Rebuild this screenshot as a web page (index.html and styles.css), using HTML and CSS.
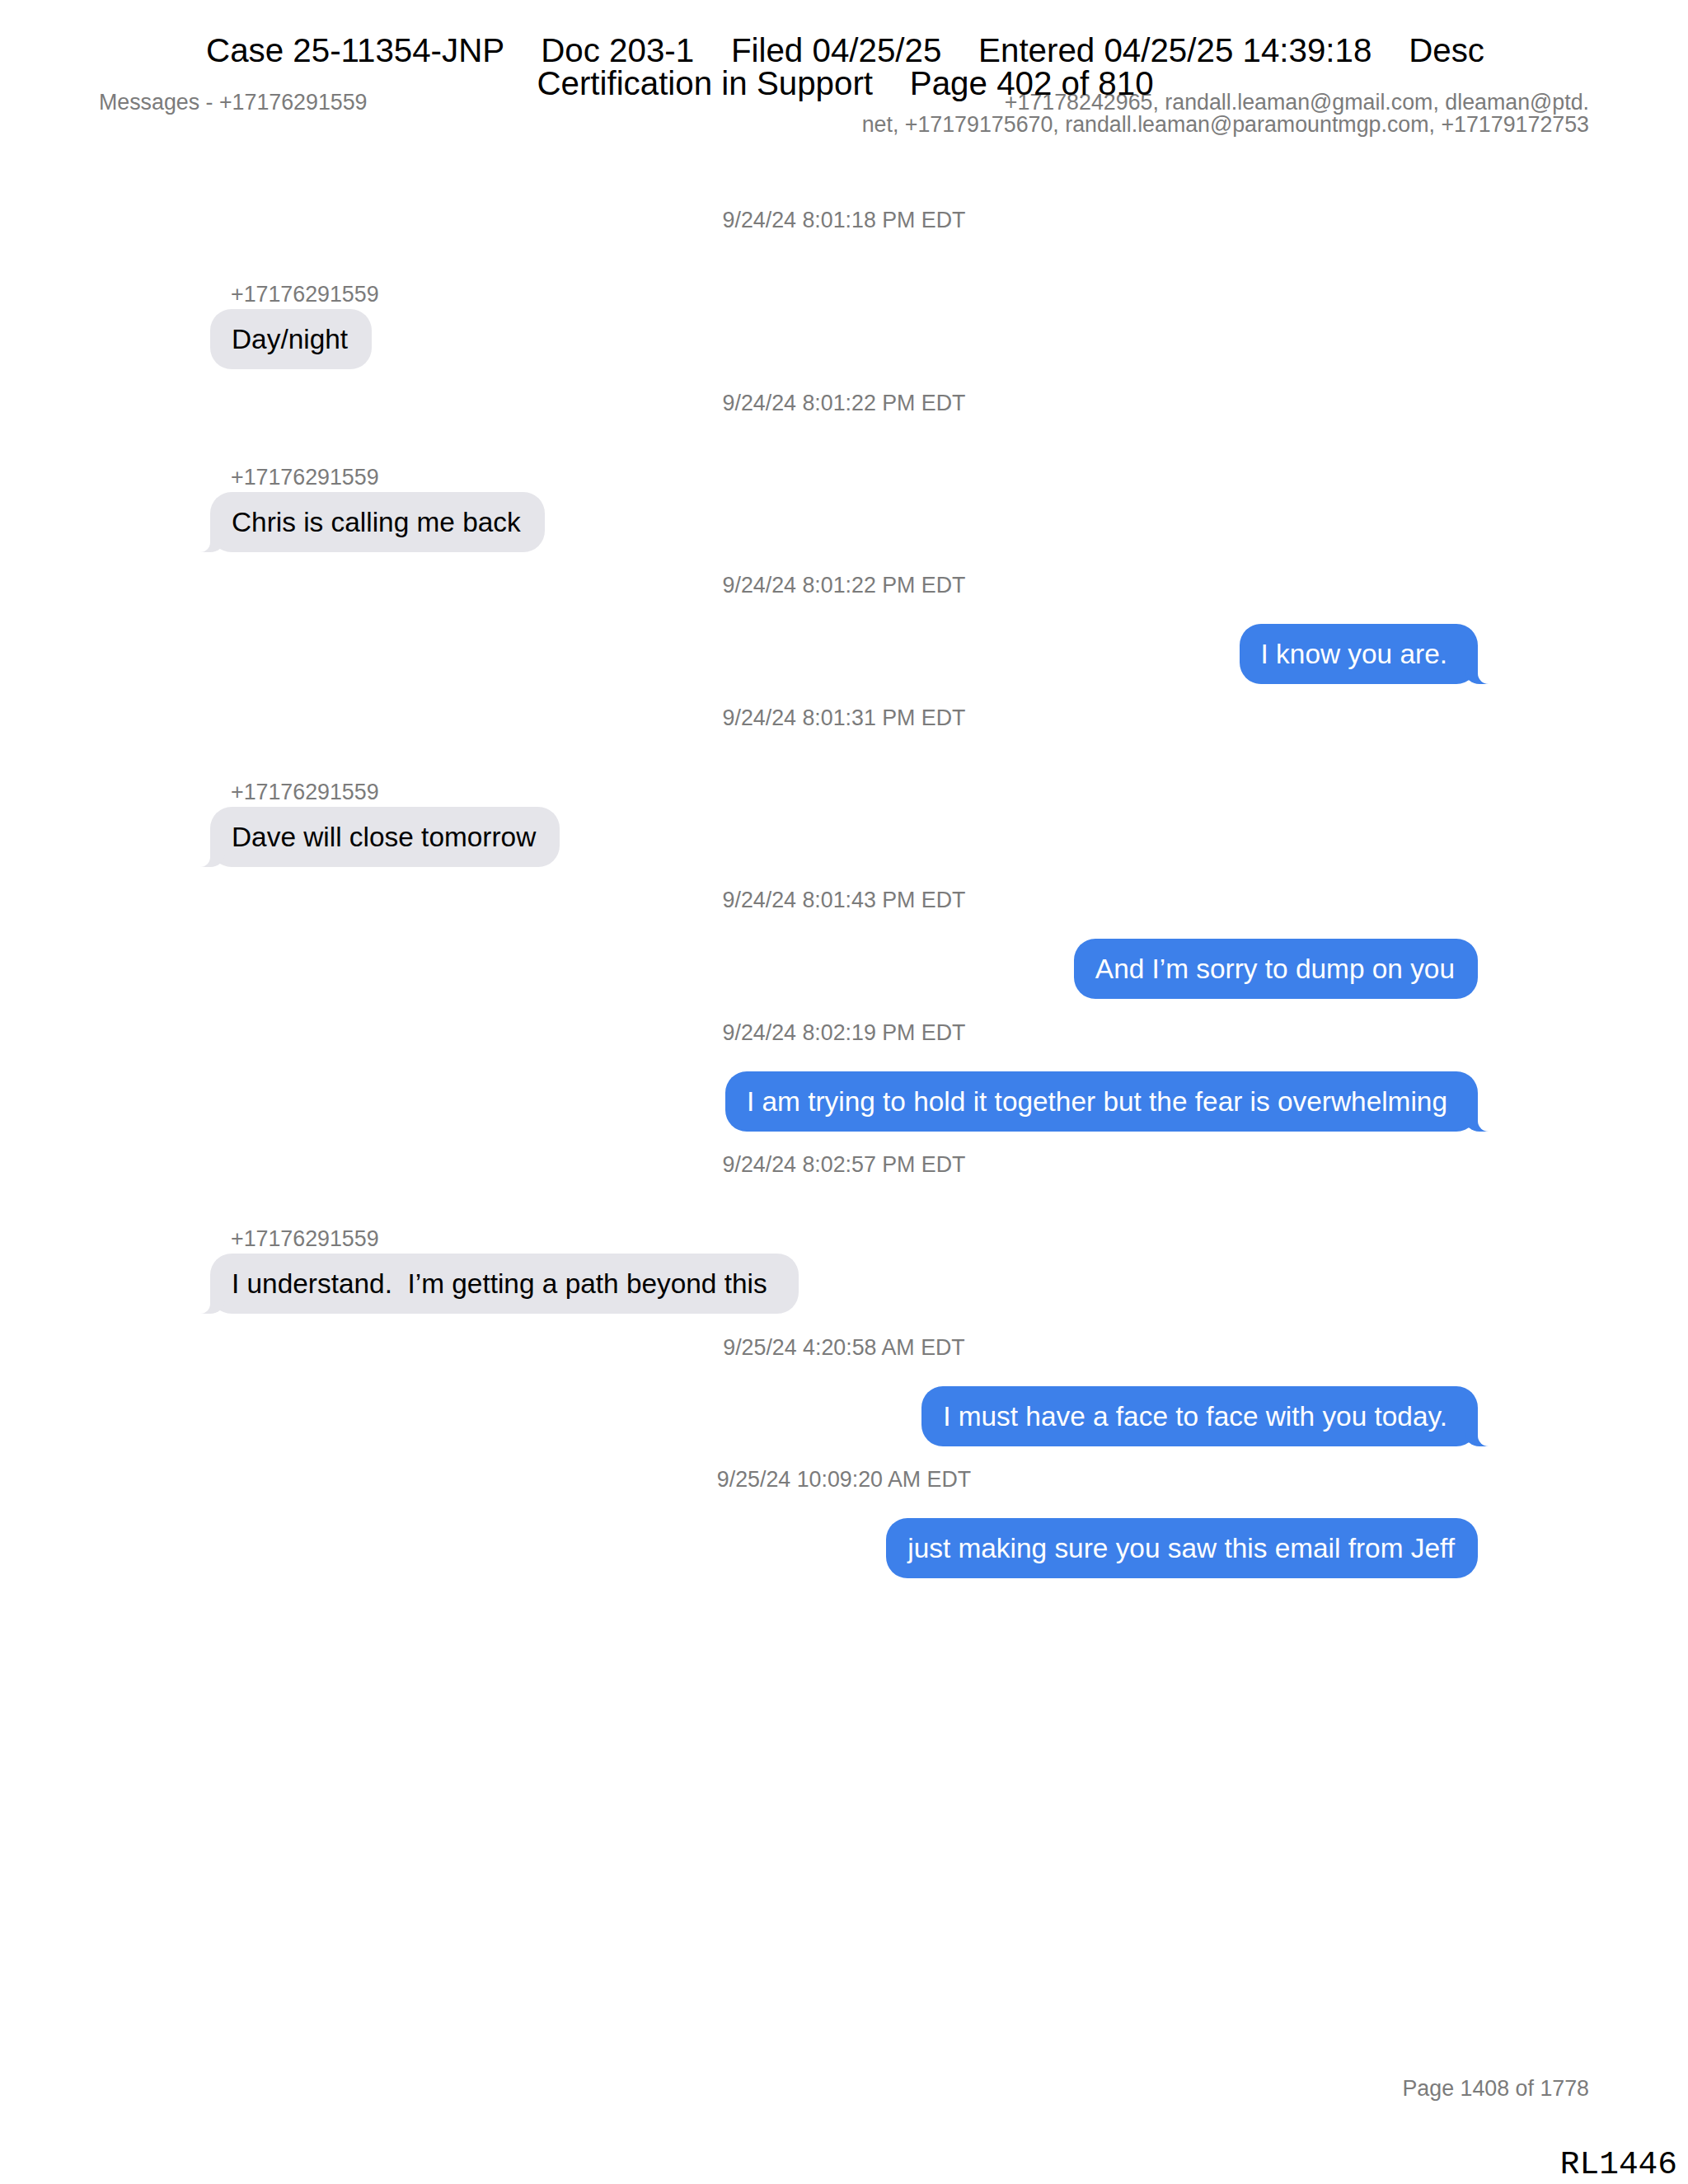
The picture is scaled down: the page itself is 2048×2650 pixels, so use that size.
FILE: index.html
```html
<!DOCTYPE html>
<html lang="en">

<head>
    <meta charset="UTF-8">
    <meta name="viewport" content="width=device-width, initial-scale=1.0">
    <title>Messages - +17176291559</title>
    <link rel="stylesheet" href="styles.css">
</head>

<body>

    <div class="page">

        <div class="court-stamp">Case 25-11354-JNP    Doc 203-1    Filed 04/25/25    Entered 04/25/25 14:39:18    Desc
Certification in Support    Page 402 of 810</div>

        <header class="doc-header">
            <div class="doc-title">Messages - +17176291559</div>
            <div class="participants">+17178242965, randall.leaman@gmail.com, dleaman@ptd.<br>net, +17179175670, randall.leaman@paramountmgp.com, +17179172753</div>
        </header>

        <main class="thread">
            <div class="timestamp">9/24/24 8:01:18 PM EDT</div>
            <div class="msg received">
                <div class="sender">+17176291559</div>
                <div class="bubble">Day/night</div>
            </div>

            <div class="timestamp">9/24/24 8:01:22 PM EDT</div>
            <div class="msg received">
                <div class="sender">+17176291559</div>
                <div class="bubble tail">Chris is calling me back</div>
            </div>

            <div class="timestamp">9/24/24 8:01:22 PM EDT</div>
            <div class="msg sent">
                <div class="bubble tail">I know you are.</div>
            </div>

            <div class="timestamp">9/24/24 8:01:31 PM EDT</div>
            <div class="msg received">
                <div class="sender">+17176291559</div>
                <div class="bubble tail">Dave will close tomorrow</div>
            </div>

            <div class="timestamp">9/24/24 8:01:43 PM EDT</div>
            <div class="msg sent">
                <div class="bubble">And I’m sorry to dump on you</div>
            </div>

            <div class="timestamp">9/24/24 8:02:19 PM EDT</div>
            <div class="msg sent">
                <div class="bubble tail">I am trying to hold it together but the fear is overwhelming</div>
            </div>

            <div class="timestamp">9/24/24 8:02:57 PM EDT</div>
            <div class="msg received">
                <div class="sender">+17176291559</div>
                <div class="bubble tail">I understand.  I’m getting a path beyond this </div>
            </div>

            <div class="timestamp">9/25/24 4:20:58 AM EDT</div>
            <div class="msg sent">
                <div class="bubble tail">I must have a face to face with you today.</div>
            </div>

            <div class="timestamp">9/25/24 10:09:20 AM EDT</div>
            <div class="msg sent">
                <div class="bubble">just making sure you saw this email from Jeff</div>
            </div>
        </main>

        <footer class="page-number">Page 1408 of 1778</footer>

        <div class="bates">RL1446</div>
    </div>

</body>

</html>
```

FILE: styles.css
```css
body {
    margin: 0;
    background-color: #fff;
    font-family: 'Liberation Sans', Arial, sans-serif;
}

.page {
    position: relative;
    display: flex;
    flex-direction: column;
    min-height: 2650px;
    box-sizing: border-box;
}

/* court filing stamp, printed over the page */
.court-stamp {
    position: absolute;
    top: 42px;
    left: 3px;
    right: 0;
    text-align: center;
    white-space: pre;
    font-size: 40.3px;
    line-height: 40px;
    color: #000;
}

.doc-header {
    display: flex;
    justify-content: space-between;
    padding: 111px 120px 0;
    font-size: 26.8px;
    line-height: 27px;
    color: #7b7b7b;
}

.participants {
    text-align: right;
}

.thread {
    display: flex;
    flex-direction: column;
    padding: 0 255px;
    margin-top: 87px;
}

.timestamp {
    align-self: center;
    font-size: 26.8px;
    line-height: 30px;
    color: #7b7b7b;
    margin-bottom: 32px;
}

.msg {
    display: flex;
    flex-direction: column;
    margin-bottom: 25.5px;
}

.msg.received {
    align-self: flex-start;
    align-items: flex-start;
    margin-top: 28px;
}

.msg.sent {
    align-self: flex-end;
    align-items: flex-end;
}

.sender {
    font-size: 26.8px;
    line-height: 30px;
    color: #7b7b7b;
    padding-left: 25px;
    margin-bottom: 3px;
}

.bubble {
    position: relative;
    font-size: 33.4px;
    line-height: 73px;
    white-space: pre;
    border-radius: 26px;
}

.received .bubble {
    background-color: #e5e5ea;
    color: #000;
    padding: 0 29px 0 26px;
}

.sent .bubble {
    background-color: #3d80ea;
    color: #fff;
    padding: 0 28px 0 26px;
}

.sent .bubble.tail {
    padding-right: 37px;
}

/* bubble tails */
.bubble.tail::before,
.bubble.tail::after {
    content: '';
    position: absolute;
    bottom: 0;
    height: 28px;
}

.sent .bubble.tail::before {
    right: -14px;
    width: 30px;
    background-color: #3d80ea;
    border-bottom-left-radius: 18px 16px;
}

.sent .bubble.tail::after {
    right: -40px;
    width: 40px;
    background-color: #fff;
    border-bottom-left-radius: 13px;
}

.received .bubble.tail::before {
    left: -12px;
    width: 30px;
    background-color: #e5e5ea;
    border-bottom-right-radius: 18px 16px;
}

.received .bubble.tail::after {
    left: -40px;
    width: 40px;
    background-color: #fff;
    border-bottom-right-radius: 12px;
}

.page-number {
    margin-top: auto;
    padding: 0 120px 101px;
    text-align: right;
    font-size: 26.8px;
    line-height: 30px;
    color: #7b7b7b;
}

.bates {
    position: absolute;
    right: 13px;
    bottom: 4px;
    font-family: 'Liberation Mono', 'Courier New', monospace;
    font-size: 39.5px;
    line-height: 39px;
    color: #000;
}
```
